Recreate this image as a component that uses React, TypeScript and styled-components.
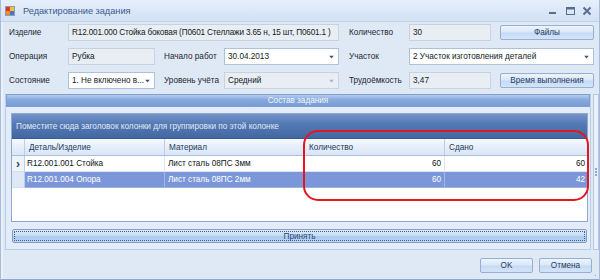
import React from 'react'
import styled, { createGlobalStyle } from 'styled-components'

const GlobalStyle = createGlobalStyle`
  html, body {
    margin: 0;
    padding: 0;
    width: 600px;
    height: 280px;
    overflow: hidden;
    background: #dfe9f6;
  }
  * {
    box-sizing: border-box;
  }
`

const FONT = `"Liberation Sans", Arial, sans-serif`

interface Row {
  detail: string
  material: string
  qty: number
  done: number
}

const rows: Row[] = [
  { detail: 'R12.001.001 Стойка', material: 'Лист сталь 08ПС 3мм', qty: 60, done: 60 },
  { detail: 'R12.001.004 Опора', material: 'Лист сталь 08ПС 2мм', qty: 60, done: 42 },
]

const TitleIcon = () => (
  <svg width='10' height='10' viewBox='0 0 10 10'>
    <rect x='0.5' y='0.5' width='9' height='9' fill='#f4f4f4' stroke='#8c9bb3' />
    <rect x='1' y='1' width='4' height='4' fill='#e2342b' />
    <rect x='5' y='1' width='4' height='4' fill='#f6c224' />
    <rect x='1' y='5' width='4' height='4' fill='#f08a24' />
    <rect x='5' y='5' width='4' height='4' fill='#3b7bd4' />
  </svg>
)

const WinButtons = () => (
  <Controls>
    <svg width='10' height='10' viewBox='0 0 10 10'>
      <rect x='1' y='6' width='7' height='2' fill='#5a6e90' />
    </svg>
    <svg width='10' height='10' viewBox='0 0 10 10'>
      <rect x='1.5' y='1.5' width='8' height='7' fill='none' stroke='#5a6e90' />
      <rect x='1' y='1' width='9' height='2.5' fill='#5a6e90' />
    </svg>
    <svg width='10' height='10' viewBox='0 0 10 10'>
      <path d='M1.5 1.5 L8.5 8.5 M8.5 1.5 L1.5 8.5' stroke='#5a6e90' strokeWidth='2' />
    </svg>
  </Controls>
)

const Arrow = ({ disabled }: { disabled?: boolean }) => (
  <ArrowBox>
    <svg width='5' height='3' viewBox='0 0 5 3'>
      <path d='M0 0 H5 L2.5 3 Z' fill={disabled ? '#a6b1c2' : '#3f5478'} />
    </svg>
  </ArrowBox>
)

const App = () => {
  return (
    <>
      <GlobalStyle />
      <Window>
        <TitleBar>
          <TitleIcon />
          <Title>Редактирование задания</Title>
          <WinButtons />
        </TitleBar>

        <Body>
          <Form>
            <Label>Изделие</Label>
            <Field $readonly $span={3} $tight>
              R12.001.000 Стойка боковая (П0601 Стеллажи 3.65 н, 15 шт, П0601.1 )
            </Field>
            <Label $pad={10}>Количество</Label>
            <Field $readonly>30</Field>
            <Button $ml={9}>Файлы</Button>

            <Label>Операция</Label>
            <Field $readonly>Рубка</Field>
            <Label $pad={9}>Начало работ</Label>
            <Field>
              30.04.2013
              <Arrow />
            </Field>
            <Label $pad={10}>Участок</Label>
            <Field $span={2}>
              2 Участок изготовления деталей
              <Arrow />
            </Field>

            <Label>Состояние</Label>
            <Field>
              1. Не включено в...
              <Arrow />
            </Field>
            <Label $pad={9}>Уровень учёта</Label>
            <Field $readonly>
              Средний
              <Arrow disabled />
            </Field>
            <Label $pad={10}>Трудоёмкость</Label>
            <Field $readonly>3,47</Field>
            <Button $ml={9}>Время выполнения</Button>
          </Form>

          <Middle>
            <Group>
              <GroupHeader>Состав задания</GroupHeader>
              <GroupBody>
                <Grid>
                  <GroupByPanel>
                    Поместите сюда заголовок колонки для группировки по этой колонке
                  </GroupByPanel>
                  <HeaderRow>
                    <Indicator $header />
                    <HeadCell $w={140}>Деталь/Изделие</HeadCell>
                    <HeadCell $w={140}>Материал</HeadCell>
                    <HeadCell $w={140}>Количество</HeadCell>
                    <HeadCell $w={143} $last>
                      Сдано
                    </HeadCell>
                  </HeaderRow>
                  {rows.map((r, i) => {
                    const sel = i === 1
                    return (
                      <DataRow key={r.detail}>
                        <Indicator $selected={sel}>{i === 0 ? '›' : ''}</Indicator>
                        <Cell $w={140} $selected={sel} $first>
                          {r.detail}
                        </Cell>
                        <Cell $w={140} $selected={sel}>
                          {r.material}
                        </Cell>
                        <Cell $w={140} $selected={sel} $right>
                          {r.qty}
                        </Cell>
                        <Cell $w={143} $selected={sel} $right $last>
                          {r.done}
                        </Cell>
                      </DataRow>
                    )
                  })}
                </Grid>
                <AcceptButton>
                  <span>Принять</span>
                </AcceptButton>
              </GroupBody>
            </Group>
            <Splitter>
              <Grip>
                <i />
                <i />
                <i />
              </Grip>
            </Splitter>
          </Middle>

          <Footer>
            <Button $w={53}>OK</Button>
            <Button $w={53}>Отмена</Button>
            <SizeGrip />
          </Footer>
        </Body>

        <Highlight />
      </Window>
    </>
  )
}

export default App

const Window = styled.div`
  position: relative;
  width: 600px;
  height: 280px;
  display: flex;
  flex-direction: column;
  font-family: ${FONT};
  font-size: 8.2px;
  color: #1c2533;
  background: #dfe9f6;
  border-left: 1px solid #a8bcd8;
  border-right: 1px solid #a8bcd8;
  border-bottom: 1px solid #90a8c9;
`

const TitleBar = styled.div`
  height: 22px;
  display: flex;
  align-items: center;
  padding: 0 0 0 4px;
  gap: 8px;
  background: linear-gradient(#e6effb, #dbe7f7 55%, #d3e1f4);
  border-bottom: 1px solid #c0d1e8;
`

const Title = styled.div`
  flex: 1;
  font-size: 9.2px;
  color: #3a5a8e;
`

const Controls = styled.div`
  display: flex;
  gap: 7px;
  padding-right: 7px;
  align-items: center;
`

const Body = styled.div`
  flex: 1;
  display: flex;
  flex-direction: column;
  padding: 0 0 0 2px;
  border-left: 2px solid #e9f0fa;
`

const Form = styled.div`
  display: grid;
  grid-template-columns: 59px 87px 69px 115px 70px 82px 103px;
  grid-auto-rows: 17px;
  row-gap: 7px;
  padding: 2px 0 0 4px;
  height: 72px;
`

const Label = styled.div<{ $pad?: number }>`
  display: flex;
  align-items: center;
  padding-left: ${(p) => p.$pad ?? 0}px;
  white-space: nowrap;
  color: #1e2633;
`

const Field = styled.div<{ $readonly?: boolean; $span?: number; $tight?: boolean }>`
  position: relative;
  grid-column: span ${(p) => p.$span ?? 1};
  display: flex;
  align-items: center;
  padding: 0 3px;
  white-space: nowrap;
  overflow: hidden;
  letter-spacing: ${(p) => (p.$tight ? '-0.16px' : 'normal')};
  background: ${(p) => (p.$readonly ? '#e9eef5' : '#ffffff')};
  border: 1px solid ${(p) => (p.$readonly ? '#c6d2e2' : '#aec1da')};
  color: #111a26;
`

const ArrowBox = styled.span`
  position: absolute;
  right: 4px;
  top: 50%;
  transform: translateY(-50%);
  display: flex;
`

const Button = styled.div<{ $ml?: number; $w?: number }>`
  display: flex;
  align-items: center;
  justify-content: center;
  margin-left: ${(p) => p.$ml ?? 0}px;
  width: ${(p) => (p.$w ? `${p.$w}px` : 'auto')};
  height: 15px;
  margin-top: 1px;
  border: 1px solid #95afd6;
  border-radius: 2px;
  background: linear-gradient(#edf4fd, #d9e7f8 48%, #c6daf3 52%, #d3e4f8);
  color: #1f3b66;
  white-space: nowrap;
`

const Middle = styled.div`
  display: flex;
  height: 156px;
`

const Group = styled.div`
  width: 586px;
  display: flex;
  flex-direction: column;
  border: 1px solid #b9cde8;
  border-top: none;
  background: #e3ecf8;
`

const GroupHeader = styled.div`
  height: 13px;
  display: flex;
  align-items: center;
  justify-content: center;
  background: linear-gradient(#b3cbef, #86a9dd 45%, #769cd6);
  border: 1px solid #7f9fcf;
  color: #f2f6fd;
`

const GroupBody = styled.div`
  flex: 1;
  display: flex;
  flex-direction: column;
  padding: 6px 5px 0 5px;
`

const Grid = styled.div`
  width: 577px;
  height: 109px;
  background: #ffffff;
  border: 1px solid #8fa9cf;
  display: flex;
  flex-direction: column;
`

const GroupByPanel = styled.div`
  height: 25px;
  display: flex;
  align-items: center;
  padding-left: 4px;
  background: linear-gradient(#7393c8, #557bb5 40%, #4267a2);
  color: #e1e9f6;
  border-bottom: 1px solid #3b5a8f;
`

const HeaderRow = styled.div`
  display: flex;
  height: 17px;
  background: linear-gradient(#f6f9fe, #e6eefa 50%, #dae6f6);
  border-bottom: 1px solid #a9bfdf;
`

const Indicator = styled.div<{ $header?: boolean; $selected?: boolean }>`
  width: 13px;
  flex: none;
  display: flex;
  align-items: center;
  justify-content: center;
  font-size: 12px;
  font-weight: bold;
  color: #2a3f66;
  border-right: 1px solid #bccde5;
  background: ${(p) =>
    p.$header ? 'transparent' : p.$selected ? '#dfe8f6' : '#eef3fa'};
  border-bottom: ${(p) => (p.$header ? 'none' : '1px solid #d3deee')};
`

const HeadCell = styled.div<{ $w: number; $last?: boolean }>`
  width: ${(p) => p.$w}px;
  flex: none;
  display: flex;
  align-items: center;
  padding-left: 4px;
  color: #223a5e;
  border-right: ${(p) => (p.$last ? 'none' : '1px solid #bccde5')};
`

const DataRow = styled.div`
  display: flex;
  height: 16px;
`

const Cell = styled.div<{
  $w: number
  $selected?: boolean
  $right?: boolean
  $last?: boolean
  $first?: boolean
}>`
  width: ${(p) => p.$w}px;
  flex: none;
  display: flex;
  align-items: center;
  justify-content: ${(p) => (p.$right ? 'flex-end' : 'flex-start')};
  padding: 0 3px 0 ${(p) => (p.$first ? 2 : 3)}px;
  background: ${(p) => (p.$selected ? '#7b97d9' : '#ffffff')};
  color: ${(p) => (p.$selected ? '#ffffff' : '#0d1420')};
  border-right: ${(p) =>
    p.$last ? 'none' : `1px solid ${p.$selected ? '#a3b6e6' : '#dde5f0'}`};
  border-bottom: 1px solid ${(p) => (p.$selected ? '#9db0e2' : '#dde5f0')};
`

const AcceptButton = styled.div`
  margin: 7px 0 0 1px;
  width: 575px;
  height: 14px;
  border: 1px solid #7f9fcc;
  border-radius: 2px;
  background: linear-gradient(#dbe9f9, #c8ddf5 45%, #a9caee 55%, #bcd6f3);
  padding: 1px;
  span {
    display: flex;
    align-items: center;
    justify-content: center;
    height: 100%;
    border: 1px dotted #4d607a;
    color: #2b4676;
  }
`

const Splitter = styled.div`
  width: 8px;
  margin-left: 2px;
  border: 1px solid #b4c8e4;
  background: #e9f0fa;
  display: flex;
  align-items: center;
  justify-content: center;
`

const Grip = styled.div`
  display: flex;
  flex-direction: column;
  gap: 1px;
  i {
    display: block;
    width: 2px;
    height: 2px;
    background: #8ea6c8;
  }
`

const Footer = styled.div`
  flex: 1;
  position: relative;
  display: flex;
  justify-content: flex-end;
  align-items: flex-start;
  gap: 6px;
  padding: 7px 7px 0 0;
`

const SizeGrip = styled.div`
  position: absolute;
  right: 1px;
  bottom: 1px;
  width: 7px;
  height: 7px;
  background:
    radial-gradient(circle, #8fa4c3 0.8px, transparent 1px) 0 0 / 3px 3px;
  clip-path: polygon(100% 0, 100% 100%, 0 100%);
`

const Highlight = styled.div`
  position: absolute;
  left: 302px;
  top: 130px;
  width: 286px;
  height: 71px;
  border: 2px solid #e5161f;
  border-radius: 15px;
  pointer-events: none;
`
